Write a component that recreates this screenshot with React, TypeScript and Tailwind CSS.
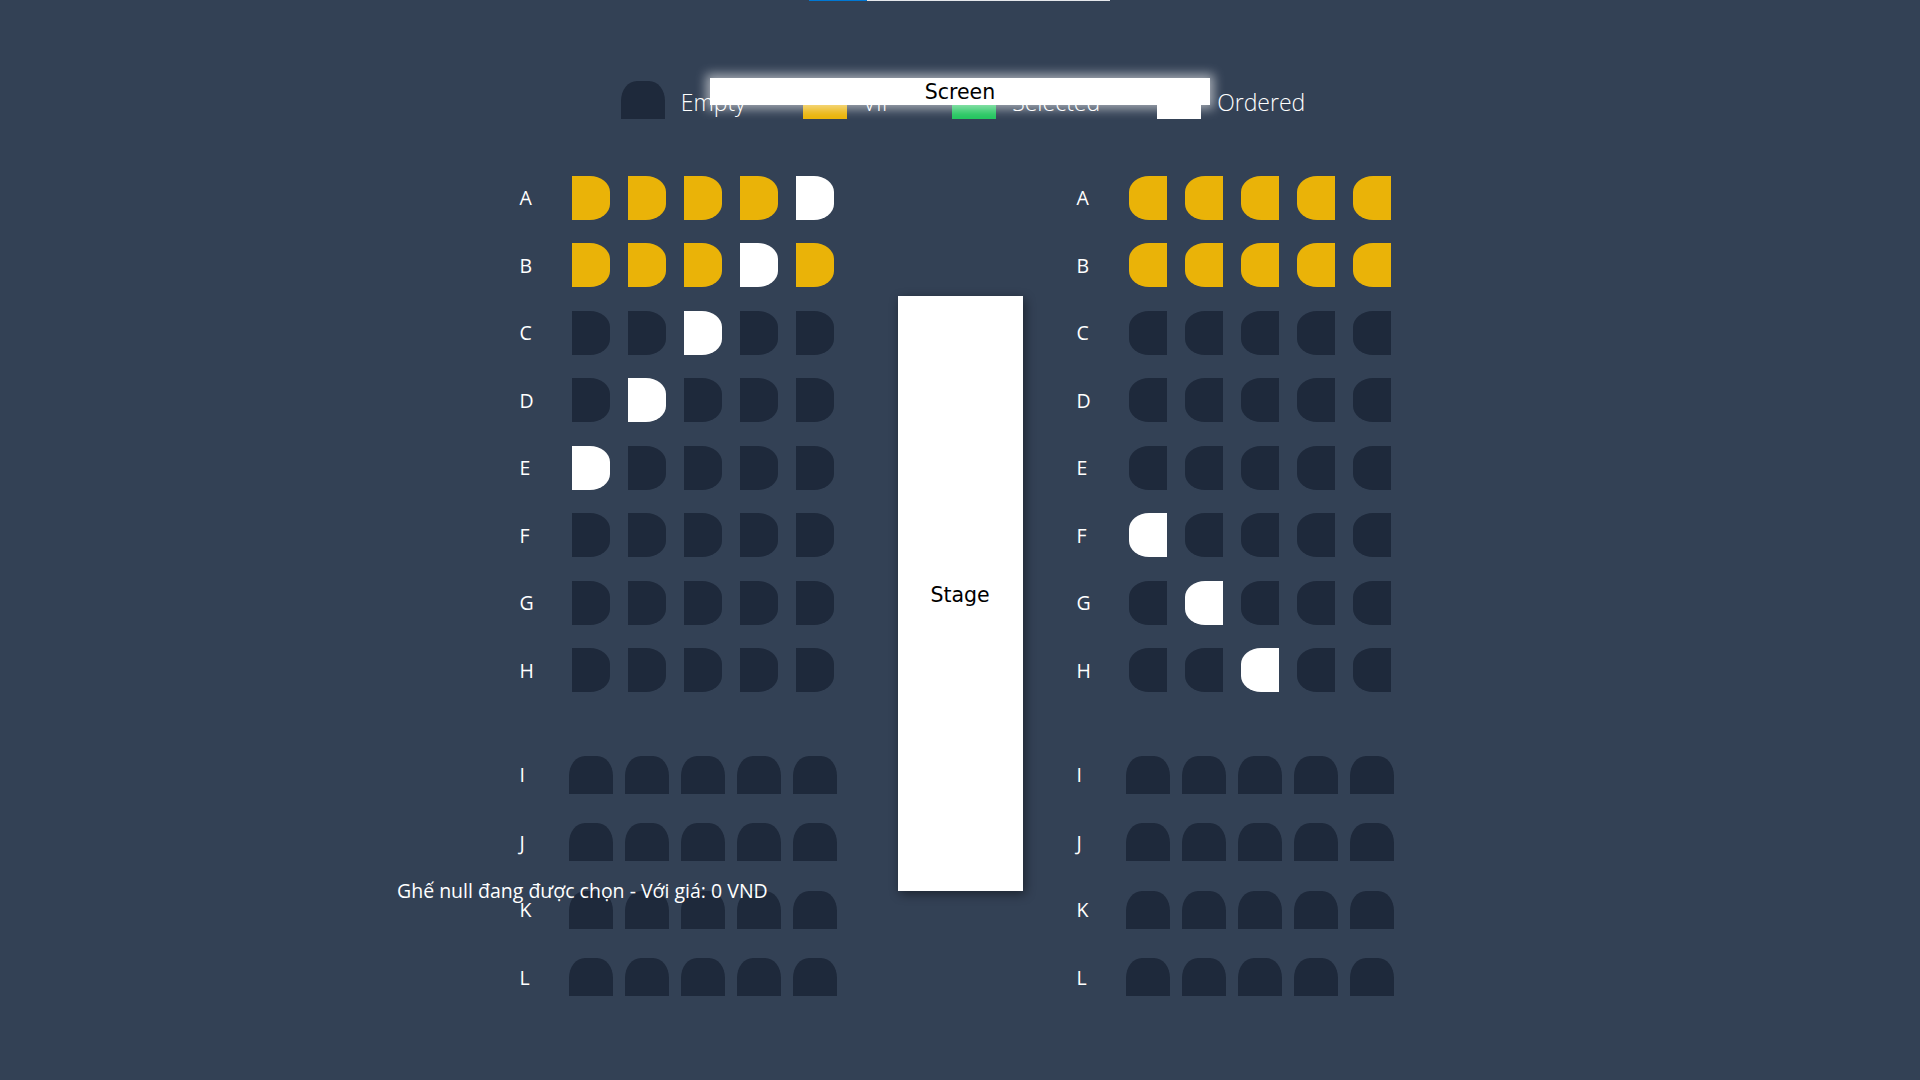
import React from "react";

type Seat = "empty" | "vip" | "ordered";

const E: Seat = "empty";
const V: Seat = "vip";
const O: Seat = "ordered";

const upperRows = ["A", "B", "C", "D", "E", "F", "G", "H"];
const lowerRows = ["I", "J", "K", "L"];

const leftUpper: Seat[][] = [
  [V, V, V, V, O],
  [V, V, V, O, V],
  [E, E, O, E, E],
  [E, O, E, E, E],
  [O, E, E, E, E],
  [E, E, E, E, E],
  [E, E, E, E, E],
  [E, E, E, E, E],
];

const rightUpper: Seat[][] = [
  [V, V, V, V, V],
  [V, V, V, V, V],
  [E, E, E, E, E],
  [E, E, E, E, E],
  [E, E, E, E, E],
  [O, E, E, E, E],
  [E, O, E, E, E],
  [E, E, O, E, E],
];

const seatColor = (s: Seat) =>
  s === "vip" ? "bg-[#eab308]" : s === "ordered" ? "bg-white" : "bg-[#1e293b]";

function SideSeat({ seat, side }: { seat: Seat; side: "left" | "right" }) {
  return (
    <div className="w-[44px] flex justify-center">
      <div
        className={`w-[38px] h-[44px] ${seatColor(seat)} ${
          side === "left" ? "rounded-r-[20px_16px]" : "rounded-l-[20px_16px]"
        }`}
      />
    </div>
  );
}

function FrontSeat() {
  return <div className="w-[44px] h-[38px] bg-[#1e293b] rounded-t-[16px_20px]" />;
}

function Block({ side, upper }: { side: "left" | "right"; upper: Seat[][] }) {
  return (
    <div className="flex flex-col w-[317px]">
      {upperRows.map((r, i) => (
        <div key={r} className="flex items-center h-[67.5px]">
          <span className="w-[49px] text-[19.5px] text-white">{r}</span>
          <div className="flex gap-[12px]">
            {upper[i].map((s, j) => (
              <SideSeat key={j} seat={s} side={side} />
            ))}
          </div>
        </div>
      ))}

      <div className="h-[37px]" />

      {lowerRows.map((r) => (
        <div key={r} className="flex items-center h-[67.5px]">
          <span className="w-[49px] text-[19.5px] text-white">{r}</span>
          <div className="flex gap-[12px]">
            {[0, 1, 2, 3, 4].map((j) => (
              <FrontSeat key={j} />
            ))}
          </div>
        </div>
      ))}
    </div>
  );
}

function LegendItem({ swatch, label }: { swatch: React.ReactNode; label: string }) {
  return (
    <div className="flex items-center gap-[16px]">
      {swatch}
      <span className="text-[23px] font-light text-white leading-none pt-[4px]">{label}</span>
    </div>
  );
}

export default function App() {
  return (
    <div className="relative min-h-screen w-full overflow-hidden bg-[#334155] font-['Open_Sans',sans-serif]">
      {/* thin top indicator */}
      <div className="absolute top-0 left-[809px] flex h-[1px]">
        <div className="w-[58px] bg-[#0078d4]" />
        <div className="w-[243px] bg-[#e5e7eb]" />
      </div>

      {/* legend */}
      <div className="relative flex justify-center gap-[57px] pt-[81px] pl-[6px]">
        <LegendItem swatch={<FrontSeat />} label="Empty" />
        <LegendItem swatch={<div className="w-[44px] h-[38px] bg-[#eab308]" />} label="VIP" />
        <LegendItem swatch={<div className="w-[44px] h-[38px] bg-[#22c55e]" />} label="Selected" />
        <LegendItem swatch={<div className="w-[44px] h-[38px] bg-white" />} label="Ordered" />

        {/* screen */}
        <div className="absolute top-[78px] left-1/2 -translate-x-1/2 w-[500px] h-[27px] bg-white shadow-[0_0_10px_4px_rgba(255,255,255,0.55)] flex items-center justify-center pt-[2px]">
          <span className="font-['DejaVu_Sans',sans-serif] text-[20.5px] text-black">Screen</span>
        </div>
      </div>

      {/* seating */}
      <div className="flex justify-center pr-[7px] mt-[45px] pb-[60px]">
        <Block side="left" upper={leftUpper} />

        <div className="ml-[61px] mr-[54px] mt-[132px] w-[125px] h-[595px] bg-white shadow-[2px_3px_10px_rgba(0,0,0,0.45)] flex items-center justify-center pt-[4px]">
          <span className="font-['DejaVu_Sans',sans-serif] text-[20.5px] text-black">Stage</span>
        </div>

        <Block side="right" upper={rightUpper} />
      </div>

      {/* selection info */}
      <p className="absolute left-[397px] top-[878px] text-[19.5px] text-white leading-[26px]">
        Ghế null đang được chọn - Với giá: 0 VND
      </p>
    </div>
  );
}
